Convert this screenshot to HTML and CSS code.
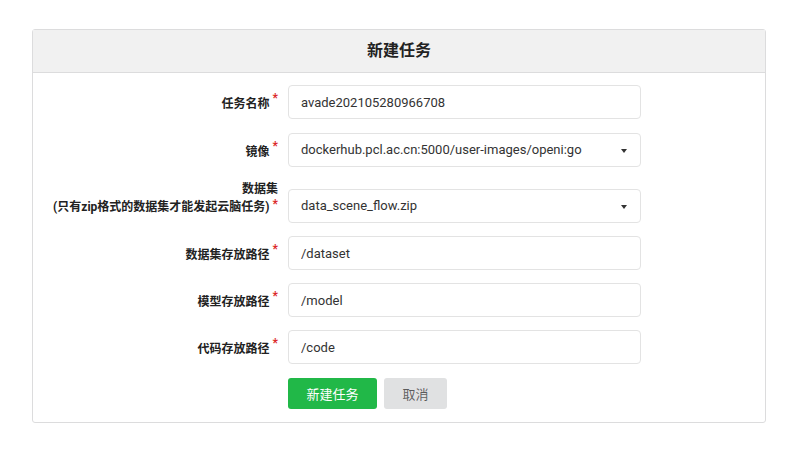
FILE: index.html
```html
<!DOCTYPE html>
<html lang="zh-CN">
<head>
<meta charset="utf-8" />
<title>新建任务</title>
<link rel="stylesheet" href="styles.css">
</head>
<body>
	<div class="card">
		<div class="card_head">新建任务</div>
		<form class="card_body">
			<div class="row row_first">
				<label class="req">任务名称</label>
				<input class="field" type="text" value="avade202105280966708" />
			</div>
			<div class="row">
				<label class="req">镜像</label>
				<div class="field select">dockerhub.pcl.ac.cn:5000/user-images/openi:go<i class="caret"></i></div>
			</div>
			<div class="row row_tall">
				<label class="req">数据集<br />(只有zip格式的数据集才能发起云脑任务)</label>
				<div class="field select">data_scene_flow.zip<i class="caret"></i></div>
			</div>
			<div class="row">
				<label class="req">数据集存放路径</label>
				<input class="field" type="text" value="/dataset" />
			</div>
			<div class="row">
				<label class="req">模型存放路径</label>
				<input class="field" type="text" value="/model" />
			</div>
			<div class="row">
				<label class="req">代码存放路径</label>
				<input class="field" type="text" value="/code" />
			</div>
			<div class="row btns">
				<button type="button" class="btn btn_green">新建任务</button>
				<button type="button" class="btn btn_gray">取消</button>
			</div>
		</form>
	</div>
</body>
</html>
```

FILE: styles.css
```css
* {
    margin: 0;
    padding: 0;
    box-sizing: border-box;
}

body {
    background: #fff;
    padding: 29px 0 0 32px;
    font-family: Roboto, "Noto Sans CJK SC", sans-serif;
    color: rgba(0, 0, 0, .87);
}

.card {
    width: 734px;
    border: 1px solid #dcdcdd;
    border-radius: 3px;
}

.card_head {
    height: 43px;
    line-height: 42px;
    background: #f1f1f1;
    border-bottom: 1px solid #dcdcdd;
    text-align: center;
    font-size: 16px;
    font-weight: bold;
    color: #222;
}

.card_body {
    padding: 12px 0 13px 0;
}

.row {
    display: flex;
    align-items: center;
    margin-bottom: 13px;
}

.row_first {
    margin-bottom: 14px;
}

.row:last-child {
    margin-bottom: 0;
}

.row_tall {
    align-items: flex-end;
}

.row_tall label {
    line-height: 18px;
    padding-bottom: 7px;
}

label {
    width: 245px;
    margin-right: 10px;
    text-align: right;
    font-size: 12px;
    font-weight: bold;
    color: #222;
}

.req::after {
    content: "*";
    color: #db2828;
    margin-left: 3px;
    vertical-align: top;
    position: relative;
    top: -3px;
}

.field {
    width: 353px;
    height: 34px;
    line-height: 32px;
    padding: 0 12px;
    border: 1px solid #e3e3e3;
    border-radius: 4px;
    font-family: Roboto, "Noto Sans CJK SC", sans-serif;
    font-size: 13px;
    color: #333;
    background: #fff;
    outline: none;
}

.select {
    position: relative;
}

.caret {
    position: absolute;
    right: 13px;
    top: 15px;
    border-left: 3.5px solid transparent;
    border-right: 3.5px solid transparent;
    border-top: 4px solid #333;
}

.btns {
    padding-left: 255px;
    margin-top: 14px;
}

.btn {
    height: 31px;
    border: none;
    border-radius: 3px;
    font-family: Roboto, "Noto Sans CJK SC", sans-serif;
    font-size: 13px;
    cursor: pointer;
}

.btn_green {
    width: 89px;
    background: #21b848;
    color: #fff;
    margin-right: 7px;
}

.btn_gray {
    width: 63px;
    background: #e0e1e2;
    color: rgba(0, 0, 0, .6);
}
```
